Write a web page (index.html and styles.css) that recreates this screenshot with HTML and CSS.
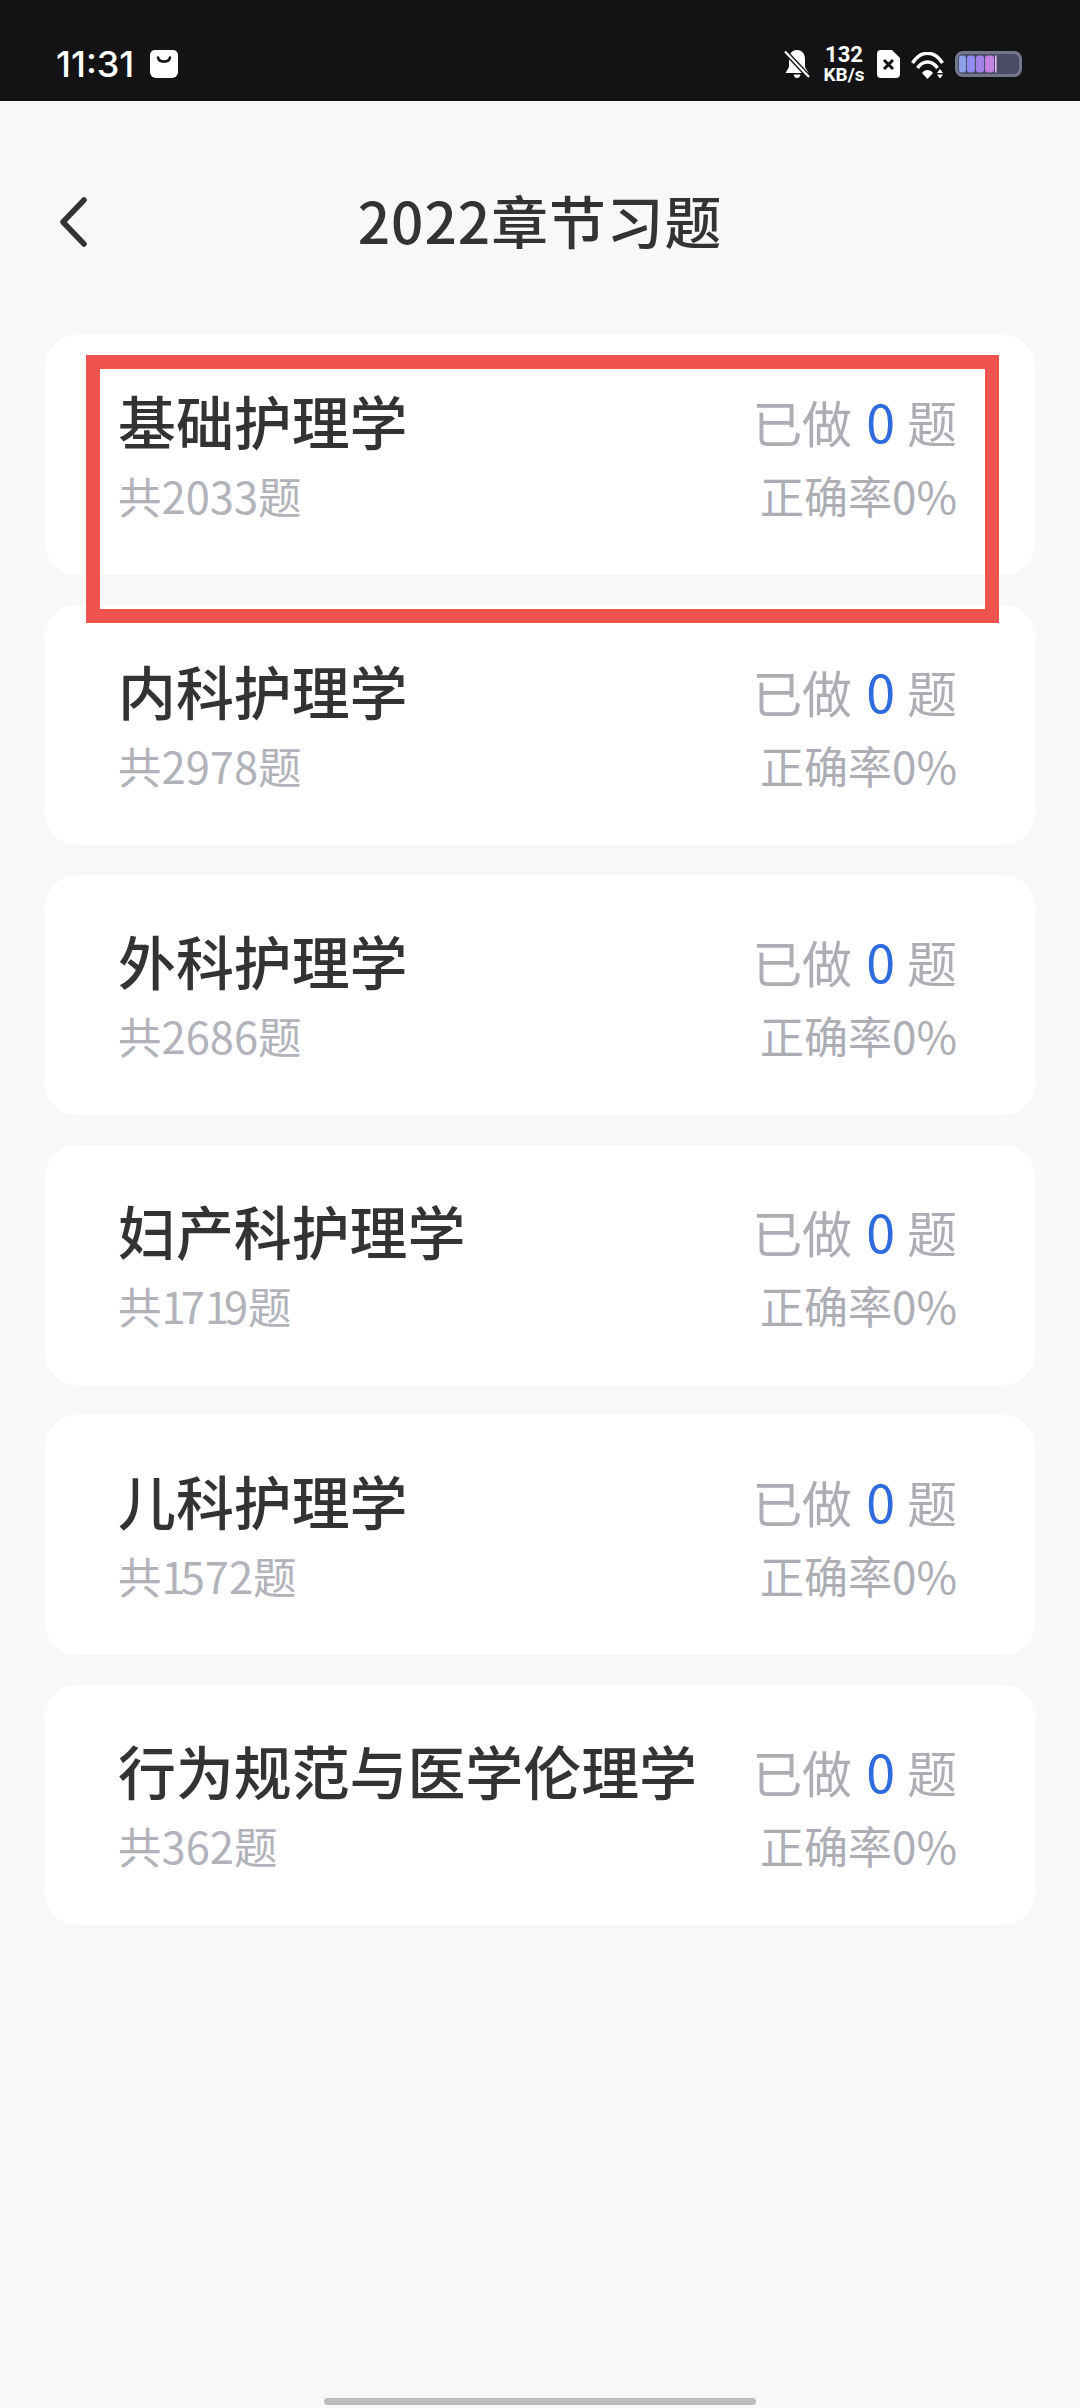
FILE: index.html
```html
<!DOCTYPE html>
<html lang="zh-CN">
<head>
<meta charset="utf-8">
<title>2022章节习题</title>
<link rel="stylesheet" href="styles.css">
</head>
<body>
<div class="screen">
  <div class="statusbar">
    <div class="status-left">
      <span class="time">11:31</span>
      <svg class="bag" viewBox="0 0 28 28" width="28" height="28"><path d="M5 0H23A5 5 0 0 1 28 5V22A6 6 0 0 1 22 28H6A6 6 0 0 1 0 22V5A5 5 0 0 1 5 0Z" fill="#fff"/><path d="M8 7.5C9 13 19 13 20 7.5" fill="none" stroke="#131315" stroke-width="2.6" stroke-linecap="round"/></svg>
    </div>
    <div class="status-right">
      <svg class="ic-bell" viewBox="0 0 26 28" width="26" height="28"><path d="M13 0C18.5 0 21 4.5 21 9V17L24.5 23H1.5L5 17V9C5 4.5 7.5 0 13 0Z" fill="#fff"/><path d="M9.5 24.5H16.5C16 27 14.5 28 13 28S10 27 9.5 24.5Z" fill="#fff"/><path d="M1 1.5L25 27" stroke="#131315" stroke-width="5"/><path d="M1 1.5L25 27" stroke="#fff" stroke-width="2.2"/></svg>
      <div class="speed"><span class="speed-num">132</span><span class="speed-unit">KB/s</span></div>
      <svg class="ic-sim" viewBox="0 0 23 28" width="23" height="28"><path d="M4 0H15L23 8V24A4 4 0 0 1 19 28H4A4 4 0 0 1 0 24V4A4 4 0 0 1 4 0Z" fill="#fff"/><path d="M7 10L16 19M16 10L7 19" stroke="#131315" stroke-width="3"/></svg>
      <svg class="ic-wifi" viewBox="0 0 34 27" width="34" height="27"><g fill="none" stroke="#fff" stroke-width="3.4"><path d="M1.5 11C9.5 -2 23.5 -2 31.5 11"/><path d="M6.5 16C12 8 21 8 26.5 16"/></g><path d="M11 21C14 17 19 17 22 21L16.5 27Z" fill="#fff"/><path d="M26 21L29 17L32 21Z M26 22.5H32L29 26.5Z" fill="#fff"/></svg>
      <svg class="ic-batt" viewBox="0 0 67 26" width="67" height="26"><rect x="1.5" y="1.5" width="64" height="23" rx="6.5" fill="#4a4c66" stroke="#74768a" stroke-width="3"/><rect x="4" y="4.5" width="7" height="17" rx="3" fill="#8fa0ea"/><rect x="12" y="4.5" width="8" height="17" rx="3" fill="#8f8cf2"/><rect x="21" y="4.5" width="8" height="17" rx="3" fill="#a284e8"/><rect x="30" y="4.5" width="9" height="17" rx="3" fill="#c283e0"/><rect x="40" y="4.5" width="1.6" height="17" fill="#e9b7ee"/></svg>
    </div>
  </div>

  <header class="topbar">
    <svg class="back" viewBox="0 0 30 50" width="30" height="50"><path d="M26 3L5 25L26 47" fill="none" stroke="#333" stroke-width="5.5" stroke-linecap="round" stroke-linejoin="round"/></svg>
    <h1 class="title">2022章节习题</h1>
  </header>

  <main class="list">
    <section class="card">
      <div class="col-left"><div class="name">基础护理学</div><div class="total">共2033题</div></div>
      <div class="col-right"><div class="done">已做<b class="count">0</b>题</div><div class="rate">正确率0%</div></div>
    </section>
    <section class="card">
      <div class="col-left"><div class="name">内科护理学</div><div class="total">共2978题</div></div>
      <div class="col-right"><div class="done">已做<b class="count">0</b>题</div><div class="rate">正确率0%</div></div>
    </section>
    <section class="card">
      <div class="col-left"><div class="name">外科护理学</div><div class="total">共2686题</div></div>
      <div class="col-right"><div class="done">已做<b class="count">0</b>题</div><div class="rate">正确率0%</div></div>
    </section>
    <section class="card">
      <div class="col-left"><div class="name">妇产科护理学</div><div class="total">共<span class="one">1</span>7<span class="one">1</span>9题</div></div>
      <div class="col-right"><div class="done">已做<b class="count">0</b>题</div><div class="rate">正确率0%</div></div>
    </section>
    <section class="card">
      <div class="col-left"><div class="name">儿科护理学</div><div class="total">共<span class="one">1</span>572题</div></div>
      <div class="col-right"><div class="done">已做<b class="count">0</b>题</div><div class="rate">正确率0%</div></div>
    </section>
    <section class="card">
      <div class="col-left"><div class="name">行为规范与医学伦理学</div><div class="total">共362题</div></div>
      <div class="col-right"><div class="done">已做<b class="count">0</b>题</div><div class="rate">正确率0%</div></div>
    </section>
  </main>

  <div class="highlight"></div>
  <div class="home-bar"></div>
</div>
</body>
</html>
```

FILE: styles.css
```css
* { box-sizing: border-box; margin: 0; padding: 0; }
html, body { width: 1080px; height: 2408px; overflow: hidden; }
body { background: #f8f8f8; font-family: "Noto Sans CJK SC", "Noto Sans", sans-serif; }

.screen { position: relative; width: 1080px; height: 2408px; display: flex; flex-direction: column; }

.statusbar {
  height: 101px; background: #131315; color: #fff;
  display: flex; justify-content: space-between; align-items: flex-start;
  padding: 50px 58px 0 56px;
}
.status-left { display: flex; align-items: center; gap: 16px; height: 28px; }
.time { font-family: Inter, Roboto, sans-serif; font-size: 36px; font-weight: 500; line-height: 28px; }
.bag { display: block; }
.status-right { display: flex; align-items: flex-start; }
.ic-bell { display: block; margin-right: 15px; }
.speed { display: flex; flex-direction: column; align-items: center; width: 38px; margin-top: -6px; font-family: Roboto, sans-serif; font-weight: 700; color: #fff; margin-right: 14px; }
.speed-num { font-size: 22px; line-height: 22px; }
.speed-unit { font-size: 19px; line-height: 18px; white-space: nowrap; }
.ic-sim { display: block; margin-right: 11px; }
.ic-wifi { display: block; margin: 2px 10px 0 0; }
.ic-batt { display: block; margin-top: 1px; }

.topbar { height: 234px; display: flex; align-items: center; justify-content: center; position: relative; flex: none; padding-top: 2px; }
.back { position: absolute; left: 58px; top: 96px; display: block; }
.title { font-size: 56.8px; font-weight: 500; color: #333; line-height: 76px; letter-spacing: 1px; }

.list { display: flex; flex-direction: column; gap: 30px; padding: 0 45px; }
.card {
  height: 240px; background: #fff; border-radius: 32px;
  display: flex; justify-content: space-between;
  padding: 47px 78px 0 73px;
}
.col-left, .col-right { display: flex; flex-direction: column; }
.col-right { align-items: flex-end; }
.name { font-size: 57.9px; line-height: 76px; font-weight: 500; color: #333; }
.total { font-size: 43.5px; line-height: 76px; color: #b2b3ba; }
.one { letter-spacing: -5px; }
.done { font-size: 50px; line-height: 78px; color: #adaeb5; display: flex; }
.count { font-size: 52px; font-weight: 400; color: #2e6bdc; margin: 0 12px 0 14px; }
.rate { font-size: 44px; line-height: 70px; color: #adaeb5; }

.highlight {
  position: absolute; left: 86px; top: 355px; width: 913px; height: 268px;
  border: 14px solid #ef5350;
}
.home-bar {
  position: absolute; left: 324px; top: 2398px; width: 432px; height: 7px;
  background: #bcbcbc; border-radius: 4px;
}
```
